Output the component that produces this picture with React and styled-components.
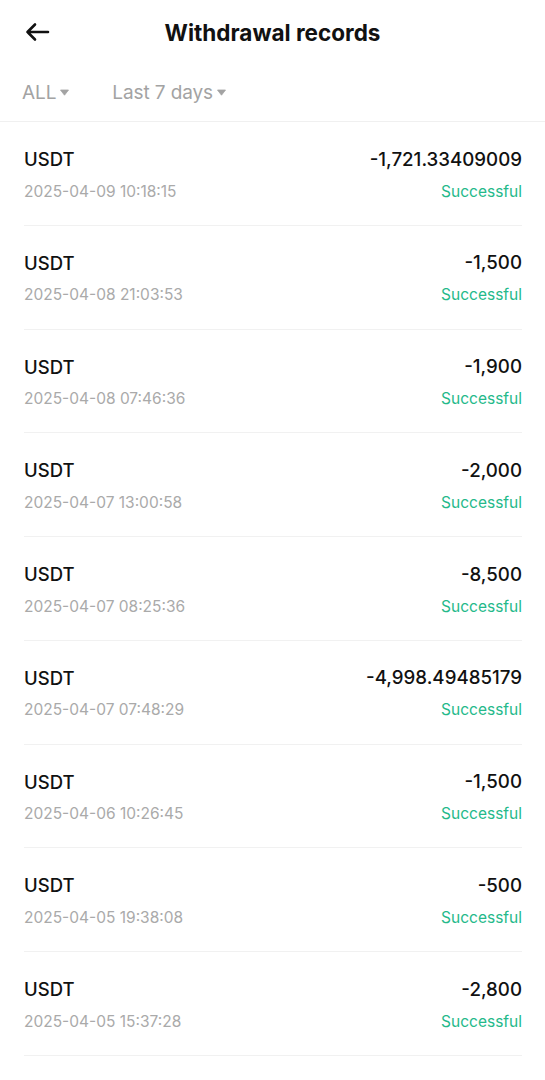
import React from "react";
import styled, { createGlobalStyle } from "styled-components";

const GlobalStyle = createGlobalStyle`
  * { box-sizing: border-box; }
  body {
    margin: 0;
    background: #fff;
    font-family: Inter, "Noto Sans", sans-serif;
    -webkit-font-smoothing: antialiased;
  }
`;

const records = [
  { amount: "-1,721.33409009", time: "2025-04-09 10:18:15" },
  { amount: "-1,500", time: "2025-04-08 21:03:53" },
  { amount: "-1,900", time: "2025-04-08 07:46:36" },
  { amount: "-2,000", time: "2025-04-07 13:00:58" },
  { amount: "-8,500", time: "2025-04-07 08:25:36" },
  { amount: "-4,998.49485179", time: "2025-04-07 07:48:29" },
  { amount: "-1,500", time: "2025-04-06 10:26:45" },
  { amount: "-500", time: "2025-04-05 19:38:08" },
  { amount: "-2,800", time: "2025-04-05 15:37:28" },
];

export default function App() {
  return (
    <Page>
      <GlobalStyle />
      <Header>
        <BackButton aria-label="Back">
          <svg width="26" height="26" viewBox="0 0 26 26" fill="none">
            <path
              d="M24 13H3.5M11 5.5L3.5 13L11 20.5"
              stroke="#111"
              strokeWidth="2.6"
              strokeLinecap="round"
              strokeLinejoin="round"
            />
          </svg>
        </BackButton>
        <Title>Withdrawal records</Title>
      </Header>
      <Filters>
        <Filter>
          ALL <Caret />
        </Filter>
        <Filter>
          Last 7 days <Caret />
        </Filter>
      </Filters>
      <List>
        {records.map((r, i) => (
          <Row key={i}>
            <TopLine>
              <Coin>USDT</Coin>
              <Amount>{r.amount}</Amount>
            </TopLine>
            <BottomLine>
              <Time>{r.time}</Time>
              <Status>Successful</Status>
            </BottomLine>
          </Row>
        ))}
      </List>
    </Page>
  );
}

function Caret() {
  return (
    <svg width="9" height="7" viewBox="0 0 9 7">
      <path
        d="M0.5 1h8L4.5 6.2z"
        fill="#a3a3a3"
        stroke="#a3a3a3"
        strokeWidth="0.8"
        strokeLinejoin="round"
      />
    </svg>
  );
}

const Page = styled.div`
  width: 545px;
  min-height: 1080px;
  background: #fff;
`;

const Header = styled.header`
  position: relative;
  height: 64px;
  display: flex;
  align-items: center;
  justify-content: center;
`;

const BackButton = styled.button`
  position: absolute;
  left: 24px;
  top: 19px;
  padding: 0;
  border: 0;
  background: none;
  display: flex;
`;

const Title = styled.h1`
  margin: 0;
  font-size: 22.5px;
  font-weight: 700;
  color: #111;
`;

const Filters = styled.div`
  height: 58px;
  display: flex;
  align-items: center;
  gap: 43px;
  padding: 0 22px 1px;
  border-bottom: 1px solid #f0f0f0;
`;

const Filter = styled.div`
  display: flex;
  align-items: center;
  gap: 4px;
  font-size: 19px;
  color: #a3a3a3;
  letter-spacing: -0.1px;
`;

const List = styled.div`
  padding: 0 23px 0 24px;
`;

const Row = styled.div`
  padding: 25px 0 23.75px;
  border-bottom: 1px solid #f1f1f1;
  display: flex;
  flex-direction: column;
  gap: 10px;
`;

const TopLine = styled.div`
  display: flex;
  justify-content: space-between;
  align-items: center;
  height: 24px;
`;

const BottomLine = styled(TopLine)`
  height: 20px;
`;

const Coin = styled.span`
  font-size: 18.5px;
  font-weight: 500;
  color: #111;
`;

const Amount = styled.span`
  font-size: 18.7px;
  font-weight: 500;
  color: #111;
`;

const Time = styled.span`
  font-size: 15.5px;
  color: #aaaaaa;
`;

const Status = styled.span`
  font-size: 15.5px;
  color: #25b98a;
`;
